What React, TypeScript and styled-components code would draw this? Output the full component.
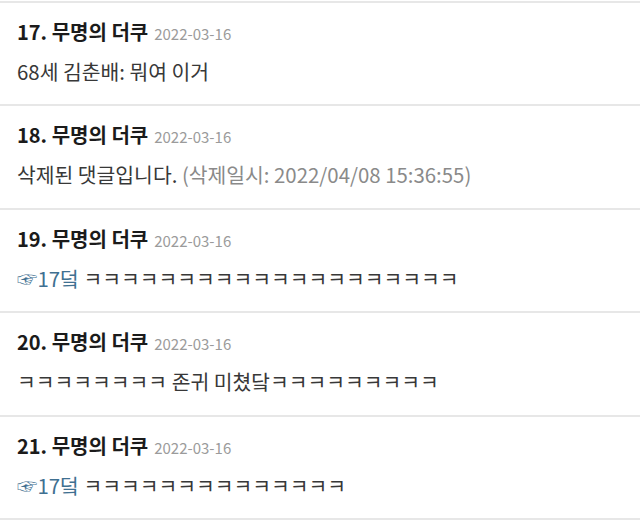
import * as React from "react";
import styled, { createGlobalStyle } from "styled-components";

const GlobalStyle = createGlobalStyle`
  html, body {
    margin: 0;
    padding: 0;
    background: #ffffff;
  }
  body {
    font-family: "Noto Sans CJK KR", "Noto Sans", sans-serif;
  }
`;

const List = styled.div`
  width: 640px;
  padding-top: 0.5px;
`;

const Item = styled.div`
  border-top: 2px solid #e7e7e7;
  padding: 17px 17px 21.6px;
  display: flex;
  flex-direction: column;
  gap: 15px;
`;

const Header = styled.div`
  display: flex;
  align-items: baseline;
  gap: 6px;
  height: 24px;
  line-height: 24px;
  white-space: nowrap;
`;

const Author = styled.span`
  font-size: 20px;
  font-weight: 700;
  color: #1b1b1b;
`;

const DateText = styled.span`
  font-size: 15px;
  color: #9b9b9b;
`;

const Body = styled.div`
  font-size: 20.4px;
  height: 24px;
  line-height: 24px;
  color: #383838;
  white-space: nowrap;
`;

const Muted = styled.span`
  color: #8a8a8a;
`;

const Reply = styled.span`
  color: #3f7091;
`;

type Comment = {
  no: number;
  date: string;
  body: React.ReactNode;
};

const k = (n: number) => "ㅋ".repeat(n);

const comments: Comment[] = [
  { no: 17, date: "2022-03-16", body: "68세 김춘배: 뭐여 이거" },
  {
    no: 18,
    date: "2022-03-16",
    body: (
      <>
        삭제된 댓글입니다. <Muted>(삭제일시: 2022/04/08 15:36:55)</Muted>
      </>
    ),
  },
  {
    no: 19,
    date: "2022-03-16",
    body: (
      <>
        <Reply>☞17덬</Reply> {k(20)}
      </>
    ),
  },
  {
    no: 20,
    date: "2022-03-16",
    body: `${k(8)} 존귀 미쳤닼${k(9)}`,
  },
  {
    no: 21,
    date: "2022-03-16",
    body: (
      <>
        <Reply>☞17덬</Reply> {k(14)}
      </>
    ),
  },
];

export default function App() {
  return (
    <>
      <GlobalStyle />
      <List>
        {comments.map((c) => (
          <Item key={c.no}>
            <Header>
              <Author>{c.no}. 무명의 더쿠</Author>
              <DateText>{c.date}</DateText>
            </Header>
            <Body>{c.body}</Body>
          </Item>
        ))}
        <Item />
      </List>
    </>
  );
}
